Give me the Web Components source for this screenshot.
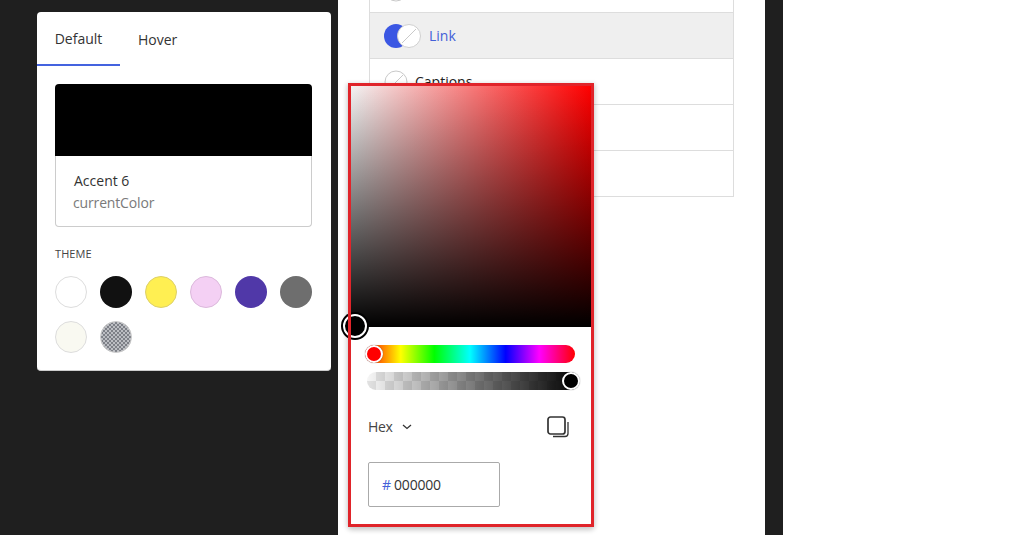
<!DOCTYPE html>
<html lang="en"><head><meta charset="utf-8"><title>Color picker</title>
<style>
html,body{margin:0;padding:0;height:100%;overflow:hidden}
body{background:#1f1f1f;font-family:"Open Sans","Noto Sans",sans-serif;color:#333}
</style></head>
<body>
<app-shell>
  <style-panel slot="left">
    <tab-bar slot="tabs"></tab-bar>
    <color-card slot="card" name="Accent 6" value="currentColor"></color-card>
    <theme-swatches slot="theme"></theme-swatches>
  </style-panel>
  <style-list slot="middle">
    <style-row></style-row>
    <style-row active label="Link"></style-row>
    <style-row label="Captions"></style-row>
    <style-row></style-row>
    <style-row></style-row>
  </style-list>
  <color-picker slot="middle"></color-picker>
</app-shell>
<script>
function def(name, css, html){
  customElements.define(name, class extends HTMLElement{
    connectedCallback(){
      if(this.shadowRoot) return;
      const r=this.attachShadow({mode:'open'});
      r.innerHTML='<style>'+css+'</style>'+(typeof html==='function'?html(this):html);
    }
  });
}
def('app-shell',
 `:host{display:grid;grid-template-columns:338px 427px 18px 1fr;height:535px;overflow:hidden}
  .left{padding:12px 7px 0 37px;box-sizing:border-box}
  .mid{background:#fff;position:relative;padding:0 31px;box-sizing:border-box}
  .right{background:#fff;grid-column:4}`,
 `<div class="left"><slot name="left"></slot></div><div class="mid"><slot name="middle"></slot></div><div></div><div class="right"></div>`);
def('style-panel',
 `:host{display:block;width:294px;height:359px;box-sizing:border-box;background:#fff;border-radius:4px;border-bottom:1px solid #ccc}
  .c{padding:18px 18px 0 18px}
  h4{margin:19px 0 15px;font-weight:400;font-size:11px;line-height:15px;color:#444;letter-spacing:.1px}`,
 `<slot name="tabs"></slot><div class="c"><slot name="card"></slot><h4>THEME</h4><slot name="theme"></slot></div>`);
def('tab-bar',
 `:host{display:flex;height:54px;font-size:14px;color:#333}
  div{display:flex;align-items:center;justify-content:center;height:54px;box-sizing:border-box}
  .a{width:83px;border-bottom:2px solid #4463df}
  .b{margin-left:18px}`,
 `<div class="a"><span>Default</span></div><div class="b"><span>Hover</span></div>`);
def('color-card',
 `:host{display:block;width:257px;height:143px;background:#fff;display:flex;flex-direction:column}
  .s{height:72px;flex:none;background:#000;border-radius:4px 4px 0 0}
  .t{flex:1;box-sizing:border-box;border:1px solid #ccc;border-top:0;border-radius:0 0 4px 4px;padding:14px 18px 0 18px;font-size:14px;line-height:22px;color:#333}
  .v{color:#7a7a7a;margin-left:-1px;letter-spacing:-.15px}`,
 h=>`<div class="s"></div><div class="t"><div>${h.getAttribute('name')}</div><div class="v">${h.getAttribute('value')}</div></div>`);
def('theme-swatches',
 `:host{display:grid;grid-template-columns:repeat(6,32px);gap:13px}
  i{display:block;width:32px;height:32px;border-radius:50%;box-sizing:border-box;border:1px solid transparent}
  .ck{background-color:#bcbec3;background-image:conic-gradient(#7d8087 25%,transparent 0 50%,#7d8087 0 75%,transparent 0);background-size:4px 4px;border-color:#ccc}`,
 `<i style="background:#fff;border-color:#ddd"></i><i style="background:#111"></i><i style="background:#ffef52;border-color:#ddd06a"></i><i style="background:#f4d0f4;border-color:#dcb9dc"></i><i style="background:#5038a8"></i><i style="background:#6e6e6e"></i><i style="background:#f9f9f1;border-color:#ddd"></i><i class="ck"></i>`);
def('style-list',
 `:host{display:block;margin-top:-33px;border:1px solid #ddd;border-width:0 1px;width:365px;box-sizing:border-box}`,
 `<slot></slot>`);
const circle=()=>`<svg width="24" height="24" viewBox="0 0 24 24"><circle cx="12" cy="12" r="11" fill="#fff" stroke="#c9c9c9"/><path d="M5 19 19 5" stroke="#c9c9c9"/></svg>`;
def('style-row',
 `:host{display:flex;align-items:center;height:46px;box-sizing:border-box;border-bottom:1px solid #ddd;padding-left:14px;font-size:14px;color:#222}
  :host([active]){background:#efefef;color:#4360d8}
  .w{display:flex;width:24px;height:24px}
  .dual{width:37px}
  .dual svg+svg{margin-left:-11px}
  span{margin-left:7px}
  :host([active]) span{margin-left:8px}`,
 h=>h.hasAttribute('active')
  ? `<div class="w dual"><svg width="24" height="24" viewBox="0 0 24 24"><circle cx="12" cy="12" r="12" fill="#3b57e3"/></svg><svg width="24" height="24" viewBox="0 0 24 24"><circle cx="12" cy="12" r="11.5" fill="#fff" stroke="#cfcfcf"/><path d="M5 19 19 5" stroke="#c9c9c9"/></svg></div><span>${h.getAttribute('label')}</span>`
  : `<div class="w">${circle()}</div>${h.getAttribute('label')?`<span>${h.getAttribute('label')}</span>`:''}`);
def('color-picker',
 `:host{position:absolute;left:10px;top:83px;width:246px;height:444px;box-sizing:border-box;background:#fff;padding:3px;border-radius:0 0 4px 4px;box-shadow:0 2px 5px 1px rgba(0,0,0,.22);font-size:14px;color:#333;display:block}
  .frame{position:absolute;inset:0;border:3px solid #e0242a;z-index:2;pointer-events:none}
  .sq{height:241px;background:linear-gradient(to top,#000,transparent),linear-gradient(to right,#f3f3f3,#f00);position:relative}
  .mk{position:absolute;left:-8px;top:228px;width:20px;height:20px;border-radius:50%;background:#000;border:2.5px solid #fff;box-shadow:0 0 0 2px #000}
  .tr{height:18px;border-radius:9px;position:relative}
  .hue{margin:18px 16px 0 14px;background:linear-gradient(to right,#f00 0%,#ff0 17%,#0f0 33%,#0ff 50%,#00f 67%,#f0f 83%,#f00 100%)}
  .alpha{margin:9px 12px 0 16px;background:linear-gradient(to right,rgba(0,0,0,0) 0%,#000 100%),repeating-conic-gradient(#e2e2e2 0 25%,#f6f6f6 0 50%) 0 0/18px 18px}
  .th{position:absolute;top:0;width:14px;height:14px;border:2px solid #fff;border-radius:50%;box-shadow:0 0 1px rgba(0,0,0,.6)}
  .hue .th{left:0;background:#f00}
  .alpha .th{right:-1px;background:#000}
  .row{display:flex;align-items:center;justify-content:space-between;margin:25px 22px 0 17px;height:24px}
  .sel{display:flex;align-items:center;gap:9px;color:#444}
  .sel span{letter-spacing:-.3px;margin-bottom:2px}
  .in{margin:23px 0 0 17px;width:132px;height:45px;box-sizing:border-box;border:1px solid #aaa;border-radius:2px;display:flex;align-items:center;padding-left:13px;gap:3px;color:#333}
  .in b{font-weight:400;color:#4360d8}
  .in span{letter-spacing:-.2px}`,
 `<div class="sq"><div class="mk"></div></div>
  <div class="tr hue"><div class="th"></div></div>
  <div class="tr alpha"><div class="th"></div></div>
  <div class="row"><div class="sel"><span>Hex</span><svg width="10" height="6" viewBox="0 0 10 6"><path d="M1 1l4 3.5L9 1" fill="none" stroke="#333" stroke-width="1.3"/></svg></div>
  <svg width="22" height="22" viewBox="0 0 22 22" fill="none" stroke="#333"><rect x="1" y="1" width="17" height="17" rx="2.5" stroke-width="1.7"/><path d="M21 6v11.5a3 3 0 0 1-3 3H6" stroke-width="1.3"/></svg></div>
  <div class="in"><b>#</b><span>000000</span></div>
  <div class="frame"></div>`);
</script>
</body></html>
